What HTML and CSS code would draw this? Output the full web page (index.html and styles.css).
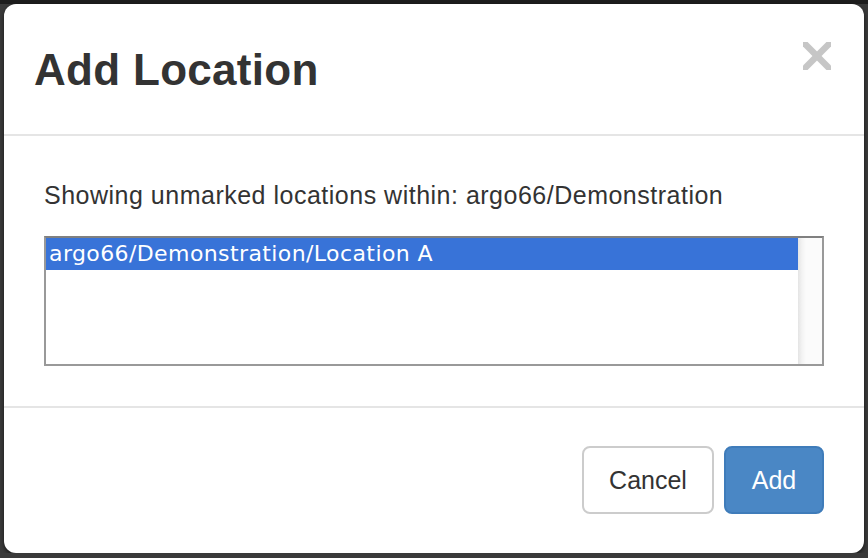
FILE: index.html
```html
<!DOCTYPE html>
<html lang="en">
<head>
<meta charset="utf-8">
<title>Add Location</title>
<link rel="stylesheet" href="styles.css">
</head>
<body>
<div class="modal">
  <div class="modal-header">
    <h4 class="modal-title">Add Location</h4>
    <button class="close" type="button" aria-label="Close">
      <svg width="28" height="28" viewBox="0 0 28 28" aria-hidden="true">
        <line x1="-3" y1="-3" x2="31" y2="31" stroke="#c6c6c6" stroke-width="6.5"/>
        <line x1="31" y1="-3" x2="-3" y2="31" stroke="#c6c6c6" stroke-width="6.5"/>
      </svg>
    </button>
  </div>
  <div class="modal-body">
    <p class="intro">Showing unmarked locations within: argo66/Demonstration</p>
    <div class="listbox">
      <div class="options">
        <div class="option selected">argo66/Demonstration/Location A</div>
      </div>
      <div class="track"></div>
    </div>
  </div>
  <div class="modal-footer">
    <button class="btn btn-default" type="button">Cancel</button>
    <button class="btn btn-primary" type="button">Add</button>
  </div>
</div>
</body>
</html>
```
FILE: styles.css
```css
html {
  background: linear-gradient(to bottom, #1d1d1d 0, #1d1d1d 4px, #3a3a3a 4px, #3a3a3a 100%);
  height: 100%;
}
body {
  margin: 0;
  padding: 4px 0 0 4px;
  font-family: "Liberation Sans", Arial, Helvetica, sans-serif;
  color: #333;
}
.modal {
  width: 860px;
  height: 549px;
  background: #fff;
  border-radius: 12px;
  box-shadow: 0 2px 4px rgba(0, 0, 0, 0.6);
  display: flex;
  flex-direction: column;
  overflow: hidden;
}
.modal-header {
  display: flex;
  justify-content: space-between;
  align-items: flex-start;
  padding: 42px 30px 40px 30px;
  border-bottom: 2px solid #e5e5e5;
}
.modal-title {
  margin: 0;
  font-size: 44px;
  line-height: 48px;
  font-weight: 700;
  color: #333;
  letter-spacing: 0.3px;
}
.close {
  margin: -4px 3px 0 0;
  padding: 0;
  border: 0;
  background: none;
  width: 28px;
  height: 28px;
  display: block;
}
.close svg {
  display: block;
}
.modal-body {
  padding: 41px 40px 40px 40px;
  border-bottom: 2px solid #e5e5e5;
}
.intro {
  margin: 0 0 23px 0;
  font-size: 25px;
  line-height: 36px;
  letter-spacing: 0.5px;
  color: #333;
}
.listbox {
  height: 130px;
  box-sizing: border-box;
  border: 2px solid #999;
  border-top-color: #808080;
  display: flex;
  background: #fff;
}
.options {
  flex: 1;
}
.option {
  height: 32px;
  line-height: 32px;
  padding-left: 3px;
  font-family: "DejaVu Sans", "Liberation Sans", sans-serif;
  font-size: 22px;
  letter-spacing: 0.4px;
  white-space: nowrap;
  color: #000;
}
.option.selected {
  background: #3873d8;
  color: #fff;
}
.track {
  width: 24px;
  background: linear-gradient(to right, #e4e4e4 0, #f3f3f3 4px, #fbfbfb 8px, #fbfbfb 100%);
}
.modal-footer {
  flex: 1;
  display: flex;
  justify-content: flex-end;
  align-items: flex-start;
  gap: 10px;
  padding: 38px 40px 0 40px;
}
.btn {
  height: 68px;
  box-sizing: border-box;
  border-radius: 8px;
  border: 2px solid #ccc;
  font-family: "Liberation Sans", Arial, sans-serif;
  font-size: 25px;
  line-height: 64px;
  padding: 0;
  text-align: center;
}
.btn-default {
  width: 132px;
  background: #fff;
  color: #333;
}
.btn-primary {
  width: 100px;
  background: #4a87c5;
  border-color: #3f7cba;
  color: #fff;
}
```
